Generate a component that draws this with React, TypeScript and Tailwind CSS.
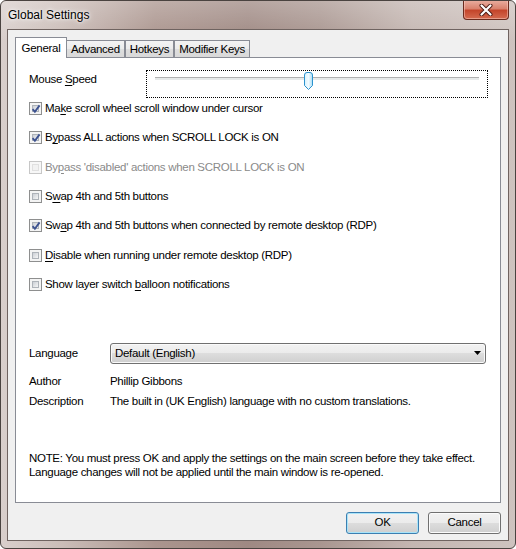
import type { ReactNode } from "react";

const FONT = "font-['Liberation_Sans',Arial,sans-serif]";

function CheckBox({ checked, disabled }: { checked?: boolean; disabled?: boolean }) {
  return (
    <span
      className={
        disabled
          ? "relative box-border block h-[13px] w-[13px] shrink-0 border border-[#c7c7c7] bg-[#f7f7f7] p-[2px]"
          : "relative box-border block h-[13px] w-[13px] shrink-0 border border-[#8e8f8f] bg-[#f4f4f4] p-[2px]"
      }
    >
      <span
        className={
          disabled
            ? "block h-full w-full border border-[#e0e0e0] bg-[#f2f2f2]"
            : "block h-full w-full border border-[#aeb3b9] bg-[linear-gradient(135deg,#cbcfd5,#f6f6f6)]"
        }
      />
      {checked && (
        <svg className="absolute left-[1px] top-[1px]" width="10" height="10" viewBox="0 0 10 10">
          <path d="M1.6 5.2 L3.9 7.8 L8.6 1.4" fill="none" stroke="#3d5290" strokeWidth="1.9" />
        </svg>
      )}
    </span>
  );
}

function U({ children }: { children: ReactNode }) {
  return <span className="underline underline-offset-[2px]">{children}</span>;
}

function CheckRow({ checked, disabled, children }: { checked?: boolean; disabled?: boolean; children: ReactNode }) {
  return (
    <div className={disabled ? "flex h-[15px] items-center gap-[3px] text-[#8a8a8a]" : "flex h-[15px] items-center gap-[3px]"}>
      <CheckBox checked={checked} disabled={disabled} />
      <span className="whitespace-nowrap">{children}</span>
    </div>
  );
}

function Tab({ label, active }: { label: string; active?: boolean }) {
  if (active) {
    return (
      <div className="relative z-10 -mr-[1px] flex h-[21px] w-[52px] items-start justify-center border border-b-0 border-[#898c95] bg-white pt-[2px]">
        {label}
      </div>
    );
  }
  return (
    <div className="flex h-[18px] items-center border border-b-0 border-[#898c95] bg-[linear-gradient(#f3f3f3,#ebebeb_50%,#dedede_50%,#d8d8d8)] px-[4px] pt-[1px]">
      {label}
    </div>
  );
}

function Button({ label, primary }: { label: string; primary?: boolean }) {
  return (
    <button
      type="button"
      className={
        primary
          ? "h-[22px] w-[73px] rounded-[3px] border border-[#3c7fb1] bg-[linear-gradient(#f2f2f2,#ebebeb_50%,#dddddd_50%,#cfcfcf)] shadow-[inset_0_0_0_1px_#a9e4f9]"
          : "h-[22px] w-[73px] rounded-[3px] border border-[#707070] bg-[linear-gradient(#f2f2f2,#ebebeb_50%,#dddddd_50%,#cfcfcf)] shadow-[inset_0_0_0_1px_#fbfbfb]"
      }
    >
      {label}
    </button>
  );
}

export default function App() {
  return (
    <div className={`${FONT} h-[549px] w-[516px] bg-white text-black`}>
      <div className="relative box-border flex h-[549px] w-[516px] flex-col overflow-hidden rounded-[6px] border border-[#4a4340] bg-[linear-gradient(90deg,#d9cfcc_0%,#cbbdb8_12%,#ab958e_30%,#9f8983_48%,#a99690_62%,#c4b6b1_80%,#cec3bf_100%)]">
        <div className="pointer-events-none absolute inset-0 bg-[linear-gradient(180deg,rgba(255,255,255,0.25),rgba(255,255,255,0)_40px)]" />

        {/* title bar */}
        <div className="relative flex h-[28px] shrink-0 items-center pl-[7px] text-[12px] [text-shadow:0_0_6px_#fff,0_0_3px_#fff]">
          Global Settings
          <div className="absolute right-[6px] top-[-1px] flex h-[20px] w-[46px] items-center justify-center rounded-b-[4px] border border-t-0 border-[#6b2b1e] bg-[linear-gradient(#eab0a2,#d9826e_45%,#c4452b_55%,#d56b50)] shadow-[inset_0_0_0_1px_rgba(255,220,210,0.45)]">
            <svg width="14" height="12" viewBox="0 0 14 12">
              <path d="M2.5 1.5 L11.5 10.5 M11.5 1.5 L2.5 10.5" stroke="#4d1b14" strokeWidth="4" strokeLinecap="round" />
              <path d="M2.5 1.5 L11.5 10.5 M11.5 1.5 L2.5 10.5" stroke="#ffffff" strokeWidth="2.2" strokeLinecap="round" />
            </svg>
          </div>
        </div>

        {/* client area */}
        <div className="relative mx-[6px] box-border h-[512px] shrink-0 border border-[#6f6360] bg-[#f0f0f0] px-[7px] pt-[7px] text-[11.5px] tracking-[-0.3px]">
          <div className="flex h-[21px] items-end">
            <Tab label="General" active />
            <Tab label="Advanced" />
            <Tab label="Hotkeys" />
            <Tab label="Modifier Keys" />
          </div>

          <div className="relative -mt-[1px] box-border h-[446px] border border-[#898c95] bg-white pl-[13px] pr-[12px] pt-[12px]">
            {/* mouse speed */}
            <div className="flex items-start">
              <div className="w-[117px] pt-[1px]">
                Mouse <U>S</U>peed
              </div>
              <div className="relative box-border h-[28px] flex-1 border border-dotted border-black">
                <div className="absolute left-[8px] right-[8px] top-[6px] h-[3px] border-t border-[#b0b0b0] bg-[#e7eaea]" />
                <svg className="absolute left-[156px] top-[1px]" width="11" height="19" viewBox="0 0 11 19">
                  <defs>
                    <linearGradient id="th" x1="0" y1="0" x2="1" y2="0">
                      <stop offset="0" stopColor="#d6f1fc" />
                      <stop offset="0.5" stopColor="#f2fbff" />
                      <stop offset="1" stopColor="#a9dcf4" />
                    </linearGradient>
                  </defs>
                  <path
                    d="M1.5 3 Q1.5 0.5 4 0.5 L7 0.5 Q9.5 0.5 9.5 3 L9.5 13.5 L5.5 17.5 L1.5 13.5 Z"
                    fill="url(#th)"
                    stroke="#2b93cf"
                    strokeWidth="1"
                  />
                </svg>
              </div>
            </div>

            {/* options */}
            <div className="mt-[3px] flex flex-col gap-[14.33px]">
              <CheckRow checked>
                Ma<U>k</U>e scroll wheel scroll window under cursor
              </CheckRow>
              <CheckRow checked>
                B<U>y</U>pass ALL actions when SCROLL LOCK is ON
              </CheckRow>
              <CheckRow disabled>
                By<U>p</U>ass 'disabled' actions when SCROLL LOCK is ON
              </CheckRow>
              <CheckRow>
                S<U>w</U>ap 4th and 5th buttons
              </CheckRow>
              <CheckRow checked>
                Sw<U>a</U>p 4th and 5th buttons when connected by remote desktop (RDP)
              </CheckRow>
              <CheckRow>
                <U>D</U>isable when running under remote desktop (RDP)
              </CheckRow>
              <CheckRow>
                Show layer switch <U>b</U>alloon notifications
              </CheckRow>
            </div>

            {/* language */}
            <div className="mt-[51px] flex items-center">
              <div className="w-[81px]">Language</div>
              <div className="relative box-border flex h-[21px] w-[376px] items-center rounded-[3px] border border-[#707070] bg-[linear-gradient(#f2f2f2,#ebebeb_50%,#dddddd_50%,#cfcfcf)] pl-[4px] shadow-[inset_0_0_0_1px_#fafafa]">
                Default (English)
                <svg className="absolute right-[4px] top-[7px]" width="7" height="4" viewBox="0 0 7 4">
                  <path d="M0 0 L7 0 L3.5 4 Z" fill="#000" />
                </svg>
              </div>
            </div>

            <div className="mt-[10px] flex h-[15px] items-center">
              <div className="w-[81px]">Author</div>
              <div>Phillip Gibbons</div>
            </div>
            <div className="mt-[5px] flex h-[15px] items-center">
              <div className="w-[81px]">Description</div>
              <div>The built in (UK English) language with no custom translations.</div>
            </div>

            <p className="mt-[42px] leading-[14px]">
              NOTE: You must press OK and apply the settings on the main screen before they take effect.
              <br />
              Language changes will not be applied until the main window is re-opened.
            </p>
          </div>

          <div className="mt-[9px] flex justify-end gap-[9px]">
            <Button label="OK" primary />
            <Button label="Cancel" />
          </div>
        </div>
      </div>
    </div>
  );
}
